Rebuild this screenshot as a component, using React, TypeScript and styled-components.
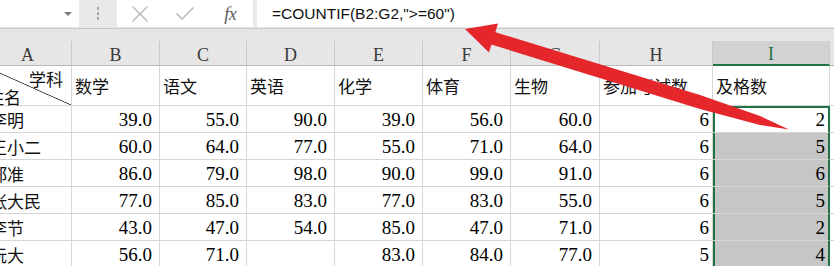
import React from 'react';
import styled, { createGlobalStyle, css } from 'styled-components';
import { X, Check } from 'lucide-react';

const serif = `"Liberation Serif", "Times New Roman", serif`;
const cjk = `"Noto Sans CJK SC", "Noto Sans", sans-serif`;
const green = '#217346';

const GlobalStyle = createGlobalStyle`
  html, body {
    margin: 0;
    padding: 0;
    background: #fff;
  }
  body {
    overflow: hidden;
  }
`;

const Styles = {
    Page: styled.div`
        position: relative;
        width: 834px;
        height: 266px;
        overflow: hidden;
        background: #fff;
    `,

    FormulaBar: styled.div`
        display: flex;
        align-items: flex-start;
        height: 29px;
        box-sizing: border-box;
        background: #e9e9e9;
        border-bottom: 1px solid #c6c6c6;
    `,

    NameBox: styled.div`
        width: 79px;
        height: 27px;
        box-sizing: border-box;
        background: #fff;
        display: flex;
        align-items: center;
        justify-content: flex-end;
        padding-right: 7px;
    `,

    Caret: styled.span`
        width: 0;
        height: 0;
        border-left: 4px solid transparent;
        border-right: 4px solid transparent;
        border-top: 4px solid #7a7a7a;
    `,

    Grip: styled.div`
        width: 38px;
        height: 27px;
        display: flex;
        flex-direction: column;
        align-items: center;
        justify-content: center;
        gap: 2.5px;
    `,

    Dot: styled.span`
        width: 2.5px;
        height: 2.5px;
        background: #a9a9a9;
    `,

    ButtonBox: styled.div`
        width: 136px;
        height: 27px;
        background: #fff;
        display: grid;
        grid-template-columns: repeat(3, 1fr);
        align-items: center;
        justify-items: center;
        color: #bdbdbd;
    `,

    Fx: styled.span`
        font-family: ${serif};
        font-style: italic;
        font-size: 18px;
        color: #5a5a5a;
        letter-spacing: -0.5px;
    `,

    FormulaInput: styled.div`
        flex: 1;
        height: 27px;
        margin-left: 4px;
        padding-left: 15px;
        background: #fff;
        display: flex;
        align-items: center;
        font-family: "Liberation Sans", Arial, sans-serif;
        font-size: 15.5px;
        color: #111;
        white-space: nowrap;
    `,

    Band: styled.div`
        height: 12px;
        background: #e6e6e6;
    `,

    Sheet: styled.div`
        display: grid;
        grid-template-columns: 88px 88px 87px 88px 88px 88px 89px 113px 117px 120px;
        grid-template-rows: 25px 40px repeat(6, 27px);
        margin-left: -16px;
    `,

    ColHead: styled.div<{ $selected?: boolean }>`
        box-sizing: border-box;
        display: flex;
        justify-content: center;
        align-items: center;
        padding-top: 4px;
        background: ${p => (p.$selected ? '#d2d2d2' : '#e6e6e6')};
        border-right: 1px solid #c9c9c9;
        border-bottom: ${p => (p.$selected ? `2px solid ${green}` : '1px solid #b8b8b8')};
        font-family: ${serif};
        font-size: 18px;
        color: ${p => (p.$selected ? green : '#3a3a3a')};
    `,

    Cell: styled.div<{ $kind?: 'name' | 'head' | 'num' | 'int'; $sel?: 'top' | 'fill' }>`
        box-sizing: border-box;
        display: flex;
        align-items: center;
        overflow: hidden;
        white-space: nowrap;
        border-right: 1px solid #d6d6d6;
        border-bottom: 1px solid #d6d6d6;
        color: #000;
        line-height: 1;

        ${p => (p.$kind === 'name' || p.$kind === 'head') && css`
            justify-content: flex-start;
            padding-left: ${p.$kind === 'name' ? 6 : 3}px;
            font-family: ${cjk};
            font-size: 17px;
            color: #111;
        `}

        ${p => (p.$kind === 'num' || p.$kind === 'int') && css`
            justify-content: flex-end;
            padding-right: ${p.$kind === 'num' ? 7 : 3}px;
            padding-top: 1px;
            font-family: ${serif};
            font-size: 19px;
        `}

        ${p => p.$sel === 'top' && css`
            border-right: 2px solid ${green};
            box-shadow: inset 2px 0 ${green}, inset 0 2px ${green};
        `}

        ${p => p.$sel === 'fill' && css`
            background: #c6c6c6;
            border-right: 2px solid ${green};
            box-shadow: inset 2px 0 ${green};
        `}
    `,

    TitleCell: styled.div`
        box-sizing: border-box;
        display: flex;
        flex-direction: column;
        justify-content: space-between;
        padding: 4px 8px 0 3px;
        border-right: 1px solid #d6d6d6;
        border-bottom: 1px solid #d6d6d6;
        background: linear-gradient(to top right, transparent calc(50% - 0.7px), #1a1a1a 50%, transparent calc(50% + 0.7px));
        font-family: ${cjk};
        font-size: 17px;
        line-height: 1;
        color: #111;
    `,

    TitleTop: styled.span`
        align-self: flex-end;
    `,

    TitleBottom: styled.span`
        align-self: flex-start;
    `,

    Arrow: styled.svg`
        position: absolute;
        left: 0;
        top: 0;
        pointer-events: none;
    `,
};

const letters = ['A', 'B', 'C', 'D', 'E', 'F', 'G', 'H', 'I', 'J'];
const subjects = ['数学', '语文', '英语', '化学', '体育', '生物', '参加考试数', '及格数'];

const rows = [
    { name: '李明', scores: ['39.0', '55.0', '90.0', '39.0', '56.0', '60.0'], taken: 6, passed: 2 },
    { name: '王小二', scores: ['60.0', '64.0', '77.0', '55.0', '71.0', '64.0'], taken: 6, passed: 5 },
    { name: '郑准', scores: ['86.0', '79.0', '98.0', '90.0', '99.0', '91.0'], taken: 6, passed: 6 },
    { name: '张大民', scores: ['77.0', '85.0', '83.0', '77.0', '83.0', '55.0'], taken: 6, passed: 5 },
    { name: '李节', scores: ['43.0', '47.0', '54.0', '85.0', '47.0', '71.0'], taken: 6, passed: 2 },
    { name: '阮大', scores: ['56.0', '71.0', '', '83.0', '84.0', '77.0'], taken: 5, passed: 4 },
];

const App: React.FC = () => (
    <Styles.Page>
        <GlobalStyle />
        <Styles.FormulaBar>
            <Styles.NameBox>
                <Styles.Caret />
            </Styles.NameBox>
            <Styles.Grip>
                <Styles.Dot />
                <Styles.Dot />
                <Styles.Dot />
            </Styles.Grip>
            <Styles.ButtonBox>
                <X size={28} strokeWidth={1.3} />
                <Check size={24} strokeWidth={1.7} />
                <Styles.Fx>fx</Styles.Fx>
            </Styles.ButtonBox>
            <Styles.FormulaInput>=COUNTIF(B2:G2,"&gt;=60")</Styles.FormulaInput>
        </Styles.FormulaBar>
        <Styles.Band />
        <Styles.Sheet>
            {letters.map(l => (
                <Styles.ColHead key={l} $selected={l === 'I'}>{l === 'J' ? '' : l}</Styles.ColHead>
            ))}

            <Styles.TitleCell>
                <Styles.TitleTop>学科</Styles.TitleTop>
                <Styles.TitleBottom>姓名</Styles.TitleBottom>
            </Styles.TitleCell>
            {subjects.map(s => (
                <Styles.Cell key={s} $kind="head">{s}</Styles.Cell>
            ))}
            <Styles.Cell />

            {rows.map((r, i) => (
                <React.Fragment key={r.name}>
                    <Styles.Cell $kind="name">{r.name}</Styles.Cell>
                    {r.scores.map((s, j) => (
                        <Styles.Cell key={j} $kind="num">{s}</Styles.Cell>
                    ))}
                    <Styles.Cell $kind="int">{r.taken}</Styles.Cell>
                    <Styles.Cell $kind="int" $sel={i === 0 ? 'top' : 'fill'}>{r.passed}</Styles.Cell>
                    <Styles.Cell />
                </React.Fragment>
            ))}
        </Styles.Sheet>

        <Styles.Arrow width={834} height={266} viewBox="0 0 834 266">
            <polygon points="465,29 498,23.5 489,52.5" fill="#e5262b" />
            <polygon points="490,30.5 700,95 760,116 789,129.5 760,125 700,109 488,43.5" fill="#e5262b" />
        </Styles.Arrow>
    </Styles.Page>
);

export default App;
